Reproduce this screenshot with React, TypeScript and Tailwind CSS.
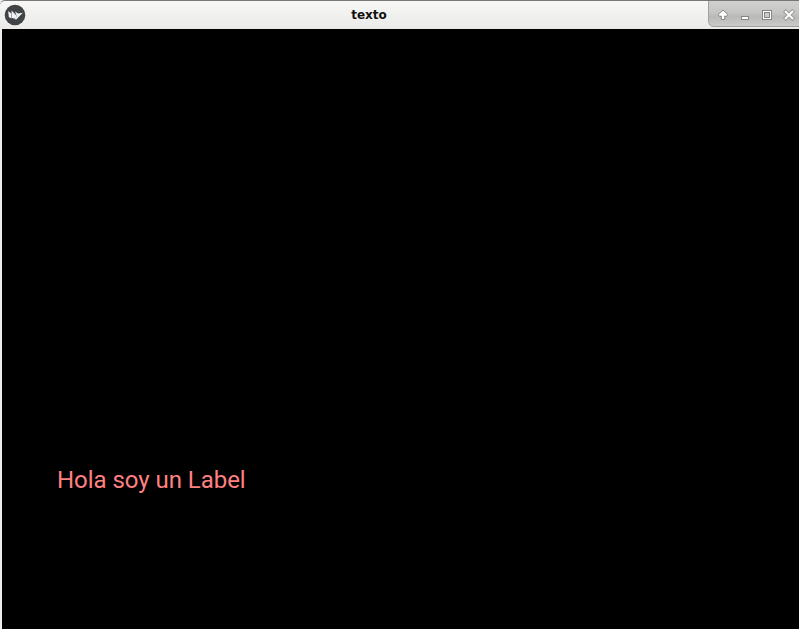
const PanelIcons = () => (
  <svg width="91" height="26" viewBox="0 0 91 26" className="block shrink-0">
    <defs>
      <linearGradient id="panel" x1="0" y1="0" x2="0" y2="1">
        <stop offset="0" stopColor="#d2d2d1" />
        <stop offset="0.48" stopColor="#c5c5c4" />
        <stop offset="0.62" stopColor="#b9b9b8" />
        <stop offset="1" stopColor="#cbcbca" />
      </linearGradient>
    </defs>
    <path d="M0.500 -1V20Q1 25.500 6 25.500H92V-1Z" fill="url(#panel)" stroke="#a0a09f" />
    <path d="M15 9L19.700 13.400L18.500 15.500L16.700 15V18.500H13.300V15L11.500 15.500L10.300 13.400Z" fill="#fff" stroke="#858584" strokeLinejoin="round" />
    <rect x="33.500" y="15.500" width="7" height="3" fill="#fff" stroke="#858584" />
    <rect x="54.500" y="9.500" width="9" height="9" fill="#fff" stroke="#858584" />
    <rect x="56.500" y="11.500" width="5" height="5" fill="#cbcbca" stroke="#858584" />
    <path d="M77.700 10.700L84.300 17.300M84.300 10.700L77.700 17.300" stroke="#959594" strokeWidth="3.800" strokeLinecap="square" />
    <path d="M77.700 10.700L84.300 17.300M84.300 10.700L77.700 17.300" stroke="#fff" strokeWidth="2" strokeLinecap="square" />
  </svg>
);

const AppLogo = () => (
  <svg width="22" height="22" viewBox="0 0 22 22" className="block shrink-0">
    <circle cx="11" cy="11" r="10.300" fill="#414446" />
    <path d="M4.200 7L7.300 9.500V14.500L4.800 13Z" fill="#f2f2f2" />
    <path d="M7.600 6.500L12.300 11.500V13.500L10.300 14.800L7.600 13.800Z" fill="#f2f2f2" />
    <path d="M11 7.500L14 9.600L18.800 8.800L12 15.800L10.800 15L12.700 12Z" fill="#f2f2f2" />
  </svg>
);

export default function App() {
  return (
    <div className="flex h-[629px] w-[799px] flex-col overflow-hidden bg-[#eeeeed]">
      <header className="flex h-[29px] shrink-0 items-start rounded-tl-[5px] border-t border-[#777] bg-linear-to-b from-[#f7f7f6] to-[#eaeae9]">
        <div className="pt-[3px] pl-1">
          <AppLogo />
        </div>
        <h1 className="flex-1 pl-[4px] pt-[6px] text-center font-['DejaVu_Sans',sans-serif] text-[12px] leading-4 font-bold text-[#111]">
          texto
        </h1>
        <PanelIcons />
      </header>
      <main className="ml-[2px] flex-1 bg-black pt-[437px] pl-[55px]">
        <p className="font-[Roboto,sans-serif] text-[24px] leading-7 tracking-[-0.04px] whitespace-nowrap text-[#ff8080]">
          Hola soy un Label
        </p>
      </main>
    </div>
  );
}
